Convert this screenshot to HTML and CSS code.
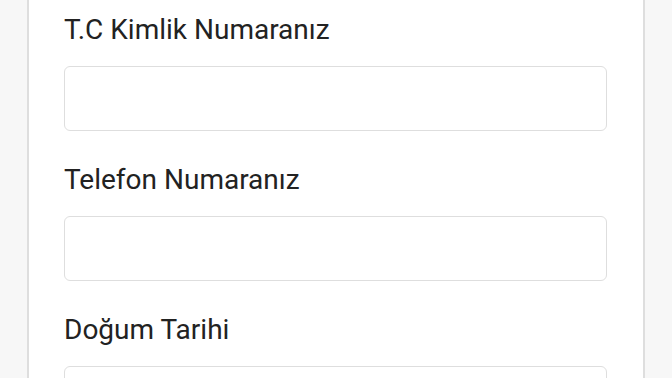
FILE: index.html
```html
<!DOCTYPE html>
<html lang="tr">
<head>
  <meta charset="UTF-8" />
  <meta name="viewport" content="width=device-width, initial-scale=1.0" />
  <title>Başvuru Formu</title>
  <link rel="stylesheet" href="styles.css">
</head>
<body>

  <div class="card">
    <div class="field">
      <label for="tc">T.C Kimlik Numaranız</label>
      <input type="text" id="tc" />
    </div>
    <div class="field">
      <label for="phone">Telefon Numaranız</label>
      <input type="tel" id="phone" />
    </div>
    <div class="field">
      <label for="birth">Doğum Tarihi</label>
      <input type="text" id="birth" />
    </div>
  </div>

</body>
</html>
```

FILE: styles.css
```css
:root {
  --text: #222;
  --line: #dedede;
  --page-bg: #f7f7f7;
  --font: Roboto, 'Noto Sans', sans-serif;
}

body {
  margin: 0;
  font-family: var(--font);
  background: var(--page-bg);
  color: var(--text);
}

.card {
  margin: 0 27px;
  padding: 15px 36px 40px 35px;
  background: white;
  border-left: 2px solid var(--line);
  border-right: 2px solid var(--line);
  display: flex;
  flex-direction: column;
  gap: 34px;
}

.field {
  display: flex;
  flex-direction: column;
}

.field label {
  font-size: 28px;
  line-height: 30px;
  margin-bottom: 21px;
}

.field input {
  height: 65px;
  box-sizing: border-box;
  border: 1px solid var(--line);
  border-radius: 6px;
  background: white;
  font-size: 20px;
  font-family: var(--font);
  padding: 0 16px;
}
```
